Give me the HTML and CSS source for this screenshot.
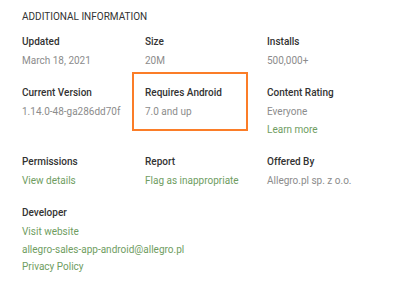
FILE: index.html
```html
<!DOCTYPE html>
<html lang="en">
<head>
  <meta charset="UTF-8" />
  <title>Additional Information</title>
  <link rel="stylesheet" href="styles.css">
</head>
<body>

<div class="details">
  <h2>Additional Information</h2>

  <div class="grid">
    <div class="cell">
      <div class="label">Updated</div>
      <div class="value">March 18, 2021</div>
    </div>
    <div class="cell">
      <div class="label">Size</div>
      <div class="value">20M</div>
    </div>
    <div class="cell">
      <div class="label">Installs</div>
      <div class="value">500,000+</div>
    </div>

    <div class="cell">
      <div class="label">Current Version</div>
      <div class="value">1.14.0-48-ga286dd70f</div>
    </div>
    <div class="cell highlight">
      <div class="label">Requires Android</div>
      <div class="value">7.0 and up</div>
    </div>
    <div class="cell">
      <div class="label">Content Rating</div>
      <div class="value">Everyone</div>
      <a class="value link" href="#">Learn more</a>
    </div>

    <div class="cell">
      <div class="label">Permissions</div>
      <a class="value link" href="#">View details</a>
    </div>
    <div class="cell">
      <div class="label">Report</div>
      <a class="value link" href="#">Flag as inappropriate</a>
    </div>
    <div class="cell">
      <div class="label">Offered By</div>
      <div class="value">Allegro.pl sp. z o.o.</div>
    </div>

    <div class="cell wide">
      <div class="label">Developer</div>
      <a class="value link" href="#">Visit website</a>
      <a class="value link" href="#">allegro-sales-app-android@allegro.pl</a>
      <a class="value link" href="#">Privacy Policy</a>
    </div>
  </div>
</div>

</body>
</html>
```

FILE: styles.css
```css
* {
  margin: 0;
  padding: 0;
  box-sizing: border-box;
}

body {
  font-family: Roboto, "Liberation Sans", sans-serif;
  background: #ffffff;
  color: #333333;
}

.details {
  padding: 8px 0 0 22px;
}

h2 {
  font-size: 10px;
  font-weight: 400;
  line-height: 18px;
  text-transform: uppercase;
  color: #333333;
  margin-bottom: 7px;
}

.grid {
  display: grid;
  grid-template-columns: 123px 122px 123px;
}

.cell {
  position: relative;
  display: flex;
  flex-direction: column;
  align-items: flex-start;
  padding-bottom: 14px;
}

.cell.wide {
  grid-column: 1 / -1;
}

.label {
  font-size: 10px;
  font-weight: 500;
  line-height: 18px;
  margin-bottom: 1px;
  color: #333333;
}

.value {
  font-size: 10px;
  line-height: 18px;
  color: #8c8c8c;
  white-space: nowrap;
}

.wide .value {
  line-height: 17.5px;
}

.link {
  color: #6f9d5f;
  text-decoration: none;
}

.highlight::after {
  content: "";
  position: absolute;
  left: -13px;
  top: -12px;
  width: 112px;
  height: 55px;
  border: 2px solid #fb7d28;
}
```
